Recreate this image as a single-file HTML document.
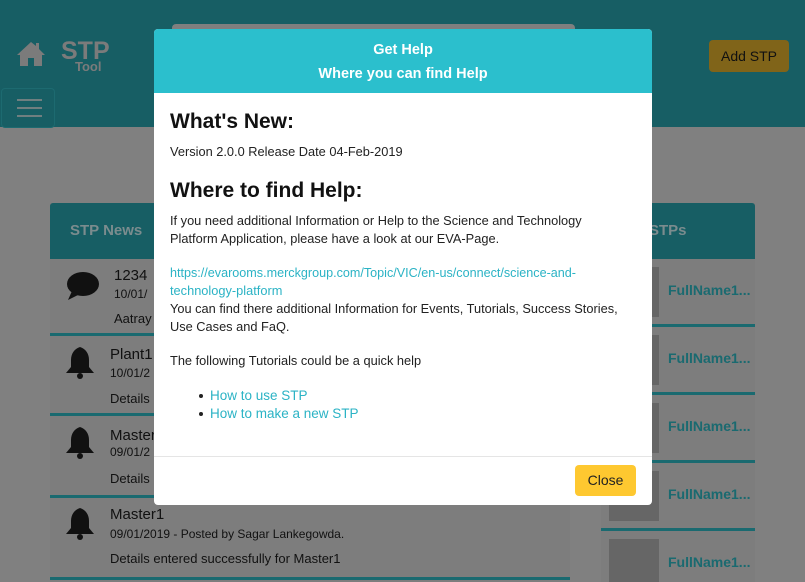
<!DOCTYPE html>
<html><head><meta charset="utf-8"><style>
*{box-sizing:border-box;margin:0;padding:0}
body{width:805px;height:582px;overflow:hidden;background:#808080;font-family:"Liberation Sans",sans-serif;position:relative}
.hdr{position:absolute;left:0;top:0;width:805px;height:127px;background:#175e64}
.search{position:absolute;left:172px;top:24px;width:403px;height:40px;background:#7f7f7f;border-radius:4px}
.logo{position:absolute;left:61px;top:37px;color:#7b7b7b;font-weight:bold;font-size:25px;letter-spacing:0px}
.logo2{position:absolute;left:75px;top:59px;color:#7b7b7b;font-weight:bold;font-size:13px}
.burger{position:absolute;left:1px;top:88px;width:54px;height:40px;border:1px solid #1d6a70;border-radius:4px}
.burger i{position:absolute;left:15px;width:25px;height:2px;background:#6f7f80}
.add{position:absolute;left:709px;top:40px;width:80px;height:32px;background:#806419;border-radius:4px;color:#111;font-size:14px;text-align:center;line-height:32px}
.panel{position:absolute;background:#7d7d7d}
.ph{background:#175e64;color:#7b8c8e;font-weight:bold;font-size:15px;height:56px;line-height:56px;border-radius:3px 3px 0 0}
.item{height:68px;border-bottom:3px solid #1a6a70;position:relative;color:#111}
.modal{position:absolute;left:154px;top:29px;width:498px;height:476px;background:#fff;border-radius:4px;overflow:hidden}
.mh{background:#2bbfcd;height:64px;color:#fff;font-weight:bold;font-size:14.5px;text-align:center;padding-top:9px;line-height:24px}
.t{position:absolute;left:16px;white-space:nowrap;color:#222;font-size:12.8px;line-height:18px}
.h{position:absolute;left:16px;white-space:nowrap;font-size:21px;font-weight:bold;color:#111;line-height:26px}
a{color:#2bb3c5;text-decoration:none}
.ft{position:absolute;left:0;top:427px;width:498px;border-top:1px solid #e5e5e5}
.close{position:absolute;left:421px;top:436px;width:61px;height:31px;background:#fec830;border-radius:4px;text-align:center;line-height:31px;font-size:14px;color:#222}
.bul{position:absolute;left:45px;width:4px;height:4px;border-radius:2px;background:#222}
</style></head><body>
<div class="hdr"></div>
<div class="search"></div>
<svg style="position:absolute;left:16px;top:41px" width="30" height="26" viewBox="0 0 30 26"><path d="M15 1 L1 14 L4 14 L4 25 L12 25 L12 17 L18 17 L18 25 L26 25 L26 14 L29 14 L23 8 L23 2 L20 2 L20 5 Z" fill="#7b7b7b"/></svg>
<div class="logo">STP</div><div class="logo2">Tool</div>
<div class="burger"><i style="top:10px"></i><i style="top:18px"></i><i style="top:26px"></i></div>
<div class="add">Add STP</div>

<div class="panel" style="left:50px;top:203px;width:520px;height:379px">
<div class="ph" style="padding-left:20px">STP News</div>
<div class="item" style="height:77px"><svg style="position:absolute;left:16px;top:12px" width="34" height="30" viewBox="0 0 34 30"><ellipse cx="17" cy="13" rx="16" ry="12" fill="#111"/><path d="M6 20 L2 29 L14 23 Z" fill="#111"/></svg><div style="position:absolute;left:64px;top:8px;font-size:15px">1234</div><div style="position:absolute;left:64px;top:28px;font-size:12px">10/01/</div><div style="position:absolute;left:64px;top:52px;font-size:13px">Aatray</div></div>
<div class="item" style="height:80px"></div>
<div class="item" style="height:82px"></div>
<div class="item" style="height:82px"></div>
</div>
<svg style="position:absolute;left:65px;top:346px" width="30" height="34" viewBox="0 0 30 34"><path d="M15 1 C9 3 6 8 6 14 L6 21 L1 27 L29 27 L24 21 L24 14 C24 8 21 3 15 1 Z" fill="#111"/><circle cx="15" cy="30" r="3" fill="#111"/></svg>
<svg style="position:absolute;left:65px;top:426px" width="30" height="34" viewBox="0 0 30 34"><path d="M15 1 C9 3 6 8 6 14 L6 21 L1 27 L29 27 L24 21 L24 14 C24 8 21 3 15 1 Z" fill="#111"/><circle cx="15" cy="30" r="3" fill="#111"/></svg>
<svg style="position:absolute;left:65px;top:507px" width="30" height="34" viewBox="0 0 30 34"><path d="M15 1 C9 3 6 8 6 14 L6 21 L1 27 L29 27 L24 21 L24 14 C24 8 21 3 15 1 Z" fill="#111"/><circle cx="15" cy="30" r="3" fill="#111"/></svg>
<div style="position:absolute;left:110px;top:346px;font-size:15px;color:#111">Plant1</div>
<div style="position:absolute;left:110px;top:366px;font-size:12px;color:#111">10/01/2</div>
<div style="position:absolute;left:110px;top:391px;font-size:13px;color:#111">Details</div>
<div style="position:absolute;left:110px;top:427px;font-size:15px;color:#111">Master</div>
<div style="position:absolute;left:110px;top:445px;font-size:12px;color:#111">09/01/2</div>
<div style="position:absolute;left:110px;top:471px;font-size:13px;color:#111">Details</div>
<div style="position:absolute;left:110px;top:506px;font-size:15px;color:#111">Master1</div>
<div style="position:absolute;left:110px;top:527px;font-size:12px;color:#111">09/01/2019 - Posted by Sagar Lankegowda.</div>
<div style="position:absolute;left:110px;top:551px;font-size:13px;color:#111">Details entered successfully for Master1</div>

<div class="panel" style="left:601px;top:203px;width:154px;height:379px">
<div class="ph" style="padding-left:48px">STPs</div>
<div class="item"></div><div class="item"></div><div class="item"></div><div class="item"></div>
</div>
<div style="position:absolute;left:609px;top:267px;width:50px;height:50px;background:#666"></div>
<div style="position:absolute;left:609px;top:335px;width:50px;height:50px;background:#666"></div>
<div style="position:absolute;left:609px;top:403px;width:50px;height:50px;background:#666"></div>
<div style="position:absolute;left:609px;top:471px;width:50px;height:50px;background:#666"></div>
<div style="position:absolute;left:609px;top:539px;width:50px;height:43px;background:#666"></div>
<div style="position:absolute;left:668px;top:282px;font-size:14px;font-weight:bold;color:#1a6a70">FullName1...</div>
<div style="position:absolute;left:668px;top:350px;font-size:14px;font-weight:bold;color:#1a6a70">FullName1...</div>
<div style="position:absolute;left:668px;top:418px;font-size:14px;font-weight:bold;color:#1a6a70">FullName1...</div>
<div style="position:absolute;left:668px;top:486px;font-size:14px;font-weight:bold;color:#1a6a70">FullName1...</div>
<div style="position:absolute;left:668px;top:554px;font-size:14px;font-weight:bold;color:#1a6a70">FullName1...</div>

<div class="modal">
<div class="mh">Get Help<br>Where you can find Help</div>
<div class="h" style="top:80px">What's New:</div>
<div class="t" style="top:114px">Version 2.0.0 Release Date 04-Feb-2019</div>
<div class="h" style="top:149px">Where to find Help:</div>
<div class="t" style="top:183px">If you need additional Information or Help to the Science and Technology</div>
<div class="t" style="top:201px">Platform Application, please have a look at our EVA-Page.</div>
<div class="t" style="top:235px;font-size:12.6px"><a>https://evarooms.merckgroup.com/Topic/VIC/en-us/connect/science-and-</a></div>
<div class="t" style="top:253px"><a>technology-platform</a></div>
<div class="t" style="top:271px">You can find there additional Information for Events, Tutorials, Success Stories,</div>
<div class="t" style="top:289px">Use Cases and FaQ.</div>
<div class="t" style="top:323px">The following Tutorials could be a quick help</div>
<div class="bul" style="top:365px"></div><div class="t" style="top:358px;left:56px;font-size:13.5px"><a>How to use STP</a></div>
<div class="bul" style="top:383px"></div><div class="t" style="top:376px;left:56px;font-size:13.5px"><a>How to make a new STP</a></div>
<div class="ft"></div>
<div class="close">Close</div>
</div>
</body></html>
